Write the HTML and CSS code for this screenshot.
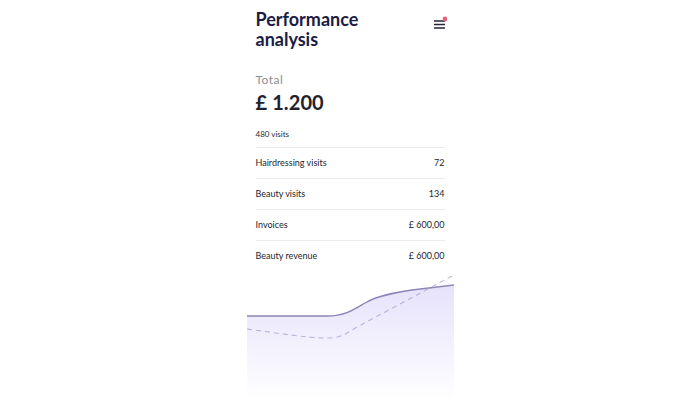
FILE: index.html
```html
<!DOCTYPE html>
<html lang="en">
<head>
    <meta charset="UTF-8">
    <meta name="viewport" content="width=device-width, initial-scale=1.0">
    <title>Performance analysis</title>
    <link rel="stylesheet" href="styles.css">
</head>
<body>

    <div class="screen">
        <div class="header">
            <h1>Performance analysis</h1>
            <button class="menu-btn" aria-label="Menu">
                <svg width="14" height="14" viewBox="0 0 14 14">
                    <path d="M1 5h11M1 8.5h11M1 12h11" stroke="#24243a" stroke-width="1.3"/>
                    <circle cx="12" cy="3" r="2.4" fill="#e9627c"/>
                </svg>
            </button>
        </div>

        <div class="total">
            <div class="total-label">Total</div>
            <div class="total-value">£ 1.200</div>
        </div>

        <div class="visits">480 visits</div>

        <ul class="stats">
            <li><span>Hairdressing visits</span><span>72</span></li>
            <li><span>Beauty visits</span><span>134</span></li>
            <li><span>Invoices</span><span>£ 600,00</span></li>
            <li><span>Beauty revenue</span><span>£ 600,00</span></li>
        </ul>

        <div class="chart">
            <svg width="207" height="130" viewBox="0 0 207 130">
                <defs>
                    <linearGradient id="fade" x1="0" y1="0" x2="0" y2="1">
                        <stop offset="0" stop-color="#e6e2fb"/>
                        <stop offset="1" stop-color="#ffffff"/>
                    </linearGradient>
                </defs>
                <!-- area under the revenue line -->
                <path d="M0 45 L80 45 C98 45 108 38 118 32 C130 25 145 22 165 19 L207 14 L207 130 L0 130 Z" fill="url(#fade)"/>
                <path d="M0 45 L80 45 C98 45 108 38 118 32 C130 25 145 22 165 19 L207 14" fill="none" stroke="#8c86b8" stroke-width="1.4"/>
                <path d="M0 58 C30 62 60 67 80 67 C95 67 100 62 110 56 L207 4" fill="none" stroke="#bab4da" stroke-width="1.1" stroke-dasharray="5 4"/>
            </svg>
        </div>
    </div>

</body>
</html>
```

FILE: styles.css
```css
body {
    margin: 0;
    background: #fff;
    font-family: Lato, "Noto Sans", sans-serif;
    color: #1f1f2e;
}
.screen {
    width: 189px;
    margin: 0 auto;
    padding-top: 9px;
}
.header {
    display: flex;
    justify-content: space-between;
    align-items: flex-start;
}
h1 {
    margin: 0;
    max-width: 130px;
    font-size: 18px;
    line-height: 20px;
    font-weight: 700;
    color: #1c1b45;
}
.menu-btn {
    background: none;
    border: none;
    padding: 0;
    margin-top: 7px;
    margin-right: -2px;
    cursor: pointer;
}
.total {
    margin-top: 23px;
}
.total-label {
    font-size: 12px;
    color: #8e8e96;
    letter-spacing: 0.5px;
}
.total-value {
    margin-top: 3px;
    font-size: 20px;
    font-weight: 700;
    color: #22222c;
    letter-spacing: 0.1px;
}
.visits {
    margin-top: 15px;
    font-size: 8px;
    color: #2a2a33;
}
.stats {
    list-style: none;
    margin: 8px 0 0;
    padding: 0;
}
.stats li {
    display: flex;
    justify-content: space-between;
    height: 30px;
    line-height: 30px;
    border-top: 1px solid #ececf0;
    font-size: 9px;
    color: #25252e;
}
.chart {
    margin: 0 -9px;
    height: 130px;
}
.chart svg {
    display: block;
}
```
